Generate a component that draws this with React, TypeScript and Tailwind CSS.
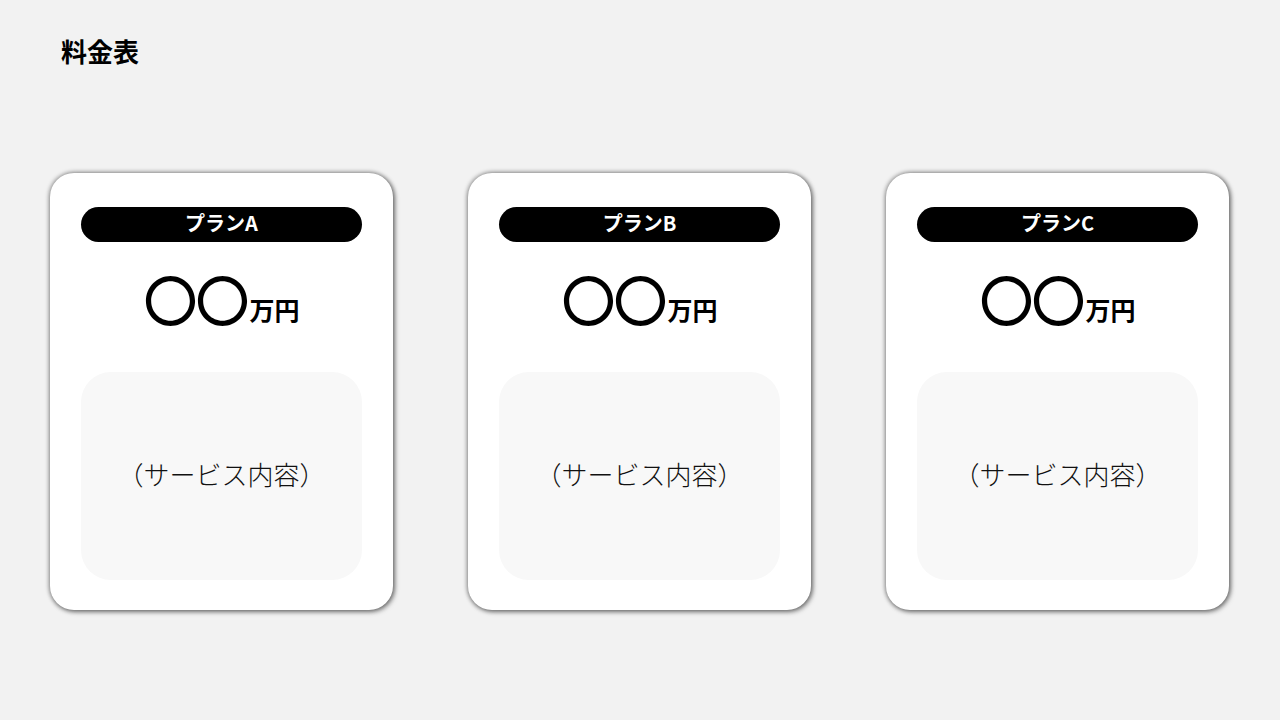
const font = { fontFamily: '"Noto Sans CJK JP", "Noto Sans", sans-serif' };

const plans = ["A", "B", "C"];

function PlanCard({ name }: { name: string }) {
  return (
    <div className="w-[343px] h-[437px] bg-white rounded-[24px] shadow-[0_0_4px_1px_rgba(0,0,0,0.4),2px_2px_5px_rgba(0,0,0,0.35)] px-[31px] pt-[34px] flex flex-col">
      <div className="h-[35px] pb-[3px] rounded-full bg-black flex items-center justify-center text-white text-[20px] font-bold">
        プラン{name}
      </div>
      <div className="h-[96px] flex items-end justify-center pb-[12px]">
        <span className="text-[54px] font-medium leading-none tracking-[-2px]">〇〇</span>
        <span className="text-[25px] font-bold leading-none mb-[4px] ml-[2px]">万円</span>
      </div>
      <div className="mt-[34px] h-[208px] pb-[6px] rounded-[30px] bg-[#f8f8f8] flex items-center justify-center text-[26px] font-light text-[#111]">
        （サービス内容）
      </div>
    </div>
  );
}

export default function App() {
  return (
    <div className="w-[1280px] h-[720px] bg-[#f2f2f2] text-black" style={font}>
      <div className="pl-[61px] pt-[33px] text-[26px] font-bold leading-[36px]">料金表</div>
      <div className="mt-[104px] pl-[50px] flex gap-[75px]">
        {plans.map((p) => (
          <PlanCard key={p} name={p} />
        ))}
      </div>
    </div>
  );
}
